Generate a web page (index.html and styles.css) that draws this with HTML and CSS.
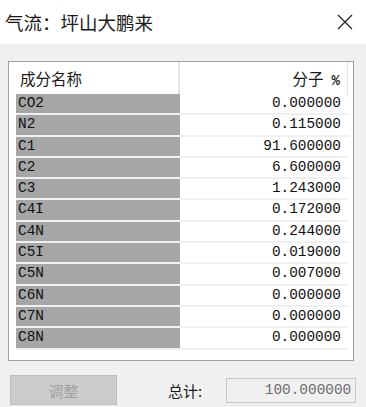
FILE: index.html
```html
<!DOCTYPE html>
<html lang="zh-CN">
<head>
    <meta charset="UTF-8">
    <title>气流：坪山大鹏来</title>
    <link rel="stylesheet" href="styles.css">
</head>
<body>
    <!-- 标题栏 -->
    <div class="titlebar">
        <span class="title">气流：坪山大鹏来</span>
        <svg class="close" width="16" height="16" viewBox="0 0 16 16">
            <path d="M1 1 L15 15 M15 1 L1 15" stroke="#222" stroke-width="1.2" fill="none"/>
        </svg>
    </div>

    <div class="content">
        <!-- 成分表 -->
        <div class="grid">
            <div class="grid-head">
                <div class="head-name">成分名称</div>
                <div class="head-value">分子<span class="pct">%</span></div>
            </div>
            <div class="rows">
                <div class="row"><div class="name">CO2</div><div class="value">0.000000</div></div>
                <div class="row"><div class="name">N2</div><div class="value">0.115000</div></div>
                <div class="row"><div class="name">C1</div><div class="value">91.600000</div></div>
                <div class="row"><div class="name">C2</div><div class="value">6.600000</div></div>
                <div class="row"><div class="name">C3</div><div class="value">1.243000</div></div>
                <div class="row"><div class="name">C4I</div><div class="value">0.172000</div></div>
                <div class="row"><div class="name">C4N</div><div class="value">0.244000</div></div>
                <div class="row"><div class="name">C5I</div><div class="value">0.019000</div></div>
                <div class="row"><div class="name">C5N</div><div class="value">0.007000</div></div>
                <div class="row"><div class="name">C6N</div><div class="value">0.000000</div></div>
                <div class="row"><div class="name">C7N</div><div class="value">0.000000</div></div>
                <div class="row"><div class="name">C8N</div><div class="value">0.000000</div></div>
            </div>
        </div>

        <!-- 底部 -->
        <div class="footer">
            <button class="btn" disabled>调整</button>
            <span class="total-label">总计:</span>
            <div class="total-box">100.000000</div>
        </div>
    </div>
</body>
</html>
```

FILE: styles.css
```css
body {
    margin: 0;
    width: 366px;
    height: 407px;
    background-color: #f0f0f0;
    font-family: "Noto Sans CJK SC", "Noto Sans", sans-serif;
    color: #1a1a1a;
    overflow: hidden;
}

/* 标题栏 */
.titlebar {
    height: 44px;
    background-color: #ffffff;
    display: flex;
    align-items: center;
    justify-content: space-between;
    padding: 0 13px 0 5px;
}
.title {
    font-size: 18.5px;
    line-height: 1;
    margin-top: 1px;
}
.close {
    display: block;
}

.content {
    padding: 17px 12px 0 8px;
}

/* 表格 */
.grid {
    border: 1px solid #a0a0a0;
    background-color: #ffffff;
    height: 298px;
    padding: 0 5px 0 7px;
}
.grid-head {
    display: grid;
    grid-template-columns: 164px 168px;
    height: 32px;
    margin-left: -7px;
    padding-left: 7px;
}
.head-name {
    margin-left: -7px;
    padding-left: 11px;
    border-right: 2px solid #e6e6e6;
    font-size: 15.5px;
    line-height: 32px;
    width: 171px;
    box-sizing: border-box;
}
.head-value {
    text-align: right;
    padding-right: 7px;
    border-right: 1px solid #e3e3e3;
    font-size: 15.5px;
    line-height: 32px;
    margin-left: -7px;
}
.pct {
    font-family: "Liberation Mono", monospace;
    font-size: 14px;
    font-weight: bold;
    margin-left: 8px;
}

.row {
    display: grid;
    grid-template-columns: 164px 168px;
    height: 19.3px;
    border-bottom: 2px solid #f0f0f0;
    font-family: "Liberation Mono", "DejaVu Sans Mono", monospace;
    font-size: 14.4px;
    line-height: 19.3px;
}
.name {
    background-color: #a6a6a6;
    padding-left: 2px;
    color: #111;
}
.value {
    text-align: right;
    padding-right: 7px;
    color: #111;
}

/* 底部 */
.footer {
    display: flex;
    align-items: center;
    margin-top: 14px;
    margin-left: 2px;
    margin-right: -12px;
}
.btn {
    flex-shrink: 0;
    width: 107px;
    height: 30px;
    background-color: #cccccc;
    border: 1px solid #bfbfbf;
    color: #a0a0a0;
    font-family: "Noto Sans CJK SC", sans-serif;
    font-size: 15px;
    padding: 0;
}
.total-label {
    flex-shrink: 0;
    white-space: nowrap;
    margin-left: 51px;
    font-size: 15px;
}
.total-box {
    flex-shrink: 0;
    margin-left: 24px;
    width: 130px;
    height: 25px;
    box-sizing: border-box;
    border: 1px solid #c8c8c8;
    text-align: right;
    padding-right: 4px;
    font-family: "Liberation Mono", monospace;
    font-size: 14.4px;
    line-height: 23px;
    color: #6d6d6d;
}
```
